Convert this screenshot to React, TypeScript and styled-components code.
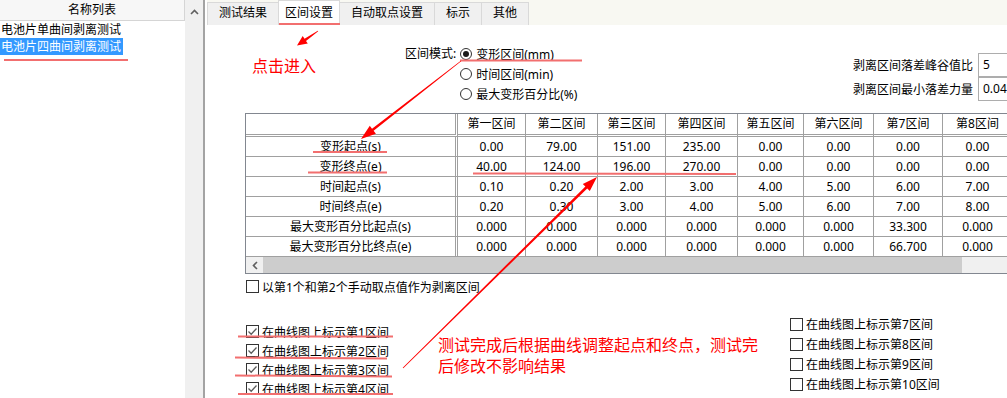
import styled, { createGlobalStyle, css } from "styled-components";

const GlobalStyle = createGlobalStyle`
  html, body {
    margin: 0;
    padding: 0;
    background: #fff;
  }
  body {
    font-family: "Noto Sans", "Noto Sans CJK SC", sans-serif;
    font-size: 12px;
    color: #000;
  }
  * {
    box-sizing: border-box;
  }
`;

const Window = styled.div`
  position: relative;
  display: flex;
  width: 1007px;
  height: 398px;
  overflow: hidden;
  background: #fff;
`;

/* left: name list */
const ListPanel = styled.div`
  display: flex;
  width: 205px;
  flex-shrink: 0;
  border-right: 2px solid #a3a3a3;
`;

const NameList = styled.div`
  display: flex;
  flex-direction: column;
  width: 185px;
`;

const ListHeader = styled.div`
  height: 21px;
  line-height: 20px;
  text-align: center;
  background: #f7f7f7;
  border-bottom: 1px solid #d5d5d5;
  border-right: 1px solid #d5d5d5;
`;

const ListItem = styled.div<{ $active?: boolean }>`
  align-self: flex-start;
  height: 17px;
  line-height: 17px;
  padding: 0 2px 0 1px;
  white-space: nowrap;
  ${(p) =>
    p.$active &&
    css`
      background: #3399ff;
      color: #fff;
    `}
`;

const VScroll = styled.div`
  width: 18px;
  background: #f0f0f0;
  display: flex;
  justify-content: center;
  padding-top: 9px;
`;

/* right: tabs + page */
const MainPanel = styled.div`
  flex: 1;
  min-width: 0;
  margin-left: 2px;
  display: flex;
  flex-direction: column;
`;

const TabBar = styled.div`
  height: 25px;
  display: flex;
  align-items: flex-end;
  background: #f8f8f2;
  flex-shrink: 0;
`;

const Tab = styled.div<{ $active?: boolean }>`
  height: 23px;
  line-height: 19px;
  padding: 0 11px;
  margin-right: -1px;
  background: #f0f0f0;
  border: 1px solid #d9d9d9;
  border-bottom: none;
  white-space: nowrap;
  ${(p) =>
    p.$active &&
    css`
      position: relative;
      z-index: 1;
      height: 25px;
      line-height: 23px;
      padding: 0 6px;
      background: #fff;
    `}
`;

const Page = styled.div`
  flex: 1;
  display: flex;
  flex-direction: column;
  padding-left: 38px;
  background: #fff;
  overflow: hidden;
`;

const TopRow = styled.div`
  display: flex;
  align-items: flex-start;
  height: 88px;
  margin-right: -21px;
  flex-shrink: 0;
`;

const ModeGroup = styled.div`
  display: flex;
  margin-left: 160px;
  margin-top: 19px;
`;

const ModeLabel = styled.div`
  line-height: 20px;
  margin-right: 4px;
`;

const RadioList = styled.div`
  display: flex;
  flex-direction: column;
`;

const RadioRow = styled.label`
  display: flex;
  align-items: center;
  gap: 4px;
  height: 20px;
  white-space: nowrap;
`;

const RadioMark = styled.span<{ $on?: boolean }>`
  position: relative;
  width: 12px;
  height: 12px;
  border: 1px solid #333;
  border-radius: 50%;
  background: #fff;
  ${(p) =>
    p.$on &&
    css`
      &::after {
        content: "";
        position: absolute;
        left: 2px;
        top: 2px;
        width: 6px;
        height: 6px;
        border-radius: 50%;
        background: #1a1a1a;
      }
    `}
`;

const ParamGroup = styled.div`
  margin-left: auto;
  margin-top: 28px;
  display: grid;
  grid-template-columns: auto 50px;
  grid-auto-rows: 24px;
  column-gap: 5px;
  align-items: center;
`;

const ParamLabel = styled.div`
  text-align: right;
  white-space: nowrap;
`;

const ParamInput = styled.div`
  height: 24px;
  line-height: 21px;
  padding-left: 4px;
  border: 1px solid #adadad;
  background: #fff;
  white-space: nowrap;
  overflow: hidden;
`;

/* table */
const COLS = [212, 68, 72, 68, 72, 66, 70, 69, 70, 70, 70];

const TableFrame = styled.div`
  align-self: flex-start;
  flex-shrink: 0;
  width: ${COLS.reduce((a, b) => a + b, 0) + 2}px;
  border: 1px solid #828790;
`;

const Grid = styled.div`
  display: grid;
  grid-template-columns: ${COLS.map((w) => `${w}px`).join(" ")};
`;

const Cell = styled.div<{ $head?: boolean; $first?: boolean }>`
  height: ${(p) => (p.$head ? 23 : 20)}px;
  line-height: ${(p) => (p.$head ? 20 : 19)}px;
  text-align: center;
  white-space: nowrap;
  overflow: hidden;
  border-right: ${(p) => (p.$first ? "3px double" : "1px solid")} #a0a0a0;
  border-bottom: ${(p) => (p.$head ? "3px double" : "1px solid")} #a0a0a0;
`;

const HScroll = styled.div`
  display: flex;
  height: 16px;
  background: #f0f0f0;
`;

const ScrollArrow = styled.div`
  width: 17px;
  display: flex;
  align-items: center;
  justify-content: center;
`;

const ScrollThumb = styled.div`
  width: 699px;
  background: #cdcdcd;
`;

/* check boxes */
const CheckRow = styled.label<{ $h?: number }>`
  display: flex;
  align-items: center;
  gap: 3px;
  height: ${(p) => p.$h ?? 19}px;
  white-space: nowrap;
`;

const Box = styled.span`
  display: inline-flex;
  width: 13px;
  height: 13px;
  border: 1px solid #333;
  background: #fff;
  flex-shrink: 0;
`;

const ManualRow = styled.div`
  margin-top: 3px;
  margin-left: 1px;
`;

const BottomRow = styled.div`
  display: grid;
  grid-template-columns: 544px auto;
  margin-left: 1px;
`;

const CheckColumn = styled.div<{ $top: number }>`
  display: flex;
  flex-direction: column;
  margin-top: ${(p) => p.$top}px;
`;

/* red annotations drawn over the window */
const Overlay = styled.svg`
  position: absolute;
  left: 0;
  top: 0;
  pointer-events: none;
  z-index: 5;
`;

const Note = styled.div<{ $x: number; $y: number }>`
  position: absolute;
  left: ${(p) => p.$x}px;
  top: ${(p) => p.$y}px;
  z-index: 6;
  font-family: "Noto Sans CJK SC", sans-serif;
  font-size: 16px;
  line-height: 21px;
  color: #ff0000;
  white-space: nowrap;
`;

const HEADERS = ["", "第一区间", "第二区间", "第三区间", "第四区间", "第五区间", "第六区间", "第7区间", "第8区间", "第9区间", "第10区间"];

const ROWS: [string, string[]][] = [
  ["变形起点(s)", ["0.00", "79.00", "151.00", "235.00", "0.00", "0.00", "0.00", "0.00", "0.00", "0.00"]],
  ["变形终点(e)", ["40.00", "124.00", "196.00", "270.00", "0.00", "0.00", "0.00", "0.00", "0.00", "0.00"]],
  ["时间起点(s)", ["0.10", "0.20", "2.00", "3.00", "4.00", "5.00", "6.00", "7.00", "8.00", "9.00"]],
  ["时间终点(e)", ["0.20", "0.30", "3.00", "4.00", "5.00", "6.00", "7.00", "8.00", "9.00", "10.00"]],
  ["最大变形百分比起点(s)", ["0.000", "0.000", "0.000", "0.000", "0.000", "0.000", "33.300", "0.000", "0.000", "0.000"]],
  ["最大变形百分比终点(e)", ["0.000", "0.000", "0.000", "0.000", "0.000", "0.000", "66.700", "0.000", "0.000", "0.000"]],
];

const UNDERLINES: [number, number, number, number][] = [
  [4, 60, 128, 60],
  [279, 24, 340, 24],
  [460, 60.5, 582, 60.5],
  [313, 152, 387, 152],
  [308, 172.5, 387, 172.5],
  [473, 173.5, 736, 174],
  [238, 336.5, 393, 336.5],
  [235, 357.5, 387, 358.5],
  [235, 375.5, 392, 376.5],
  [238, 394, 393, 394],
];

// tapered arrow polygon, thin at the tail, filled head at (x2, y2)
function arrow(x1: number, y1: number, x2: number, y2: number, head: number, half: number) {
  const len = Math.hypot(x2 - x1, y2 - y1);
  const ux = (x2 - x1) / len;
  const uy = (y2 - y1) / len;
  const nx = -uy;
  const ny = ux;
  const bx = x2 - ux * head;
  const by = y2 - uy * head;
  const pts = [
    [x1 + nx * 0.4, y1 + ny * 0.4],
    [bx + nx * 1.3, by + ny * 1.3],
    [bx + nx * half, by + ny * half],
    [x2, y2],
    [bx - nx * half, by - ny * half],
    [bx - nx * 1.3, by - ny * 1.3],
    [x1 - nx * 0.4, y1 - ny * 0.4],
  ];
  return pts.map(([x, y]) => `${x.toFixed(1)},${y.toFixed(1)}`).join(" ");
}

function Check({ on }: { on?: boolean }) {
  return (
    <Box>
      {on && (
        <svg width="11" height="11" viewBox="0 0 11 11">
          <polyline points="1.5,5.5 4.2,8.2 9.5,2.5" fill="none" stroke="#5c5c5c" strokeWidth="1.3" />
        </svg>
      )}
    </Box>
  );
}

function App() {
  return (
    <>
      <GlobalStyle />
      <Window>
        <ListPanel>
          <NameList>
            <ListHeader>名称列表</ListHeader>
            <ListItem>电池片单曲间剥离测试</ListItem>
            <ListItem $active>电池片四曲间剥离测试</ListItem>
          </NameList>
          <VScroll>
            <svg width="9" height="6" viewBox="0 0 9 6">
              <polyline points="1,5 4.5,1.5 8,5" fill="none" stroke="#606060" strokeWidth="1.6" />
            </svg>
          </VScroll>
        </ListPanel>

        <MainPanel>
          <TabBar>
            <Tab>测试结果</Tab>
            <Tab $active>区间设置</Tab>
            <Tab>自动取点设置</Tab>
            <Tab>标示</Tab>
            <Tab>其他</Tab>
          </TabBar>

          <Page>
            <TopRow>
              <ModeGroup>
                <ModeLabel>区间模式:</ModeLabel>
                <RadioList>
                  <RadioRow>
                    <RadioMark $on />
                    变形区间(mm)
                  </RadioRow>
                  <RadioRow>
                    <RadioMark />
                    时间区间(min)
                  </RadioRow>
                  <RadioRow>
                    <RadioMark />
                    最大变形百分比(%)
                  </RadioRow>
                </RadioList>
              </ModeGroup>
              <ParamGroup>
                <ParamLabel>剥离区间落差峰谷值比</ParamLabel>
                <ParamInput>5</ParamInput>
                <ParamLabel>剥离区间最小落差力量</ParamLabel>
                <ParamInput>0.045</ParamInput>
              </ParamGroup>
            </TopRow>

            <TableFrame>
              <Grid>
                {HEADERS.map((h, i) => (
                  <Cell key={i} $head $first={i === 0}>
                    {h}
                  </Cell>
                ))}
                {ROWS.map(([label, values]) => [
                  <Cell key={label} $first>
                    {label}
                  </Cell>,
                  ...values.map((v, i) => <Cell key={label + i}>{v}</Cell>),
                ])}
              </Grid>
              <HScroll>
                <ScrollArrow>
                  <svg width="6" height="9" viewBox="0 0 6 9">
                    <polyline points="5,1 1.5,4.5 5,8" fill="none" stroke="#606060" strokeWidth="1.6" />
                  </svg>
                </ScrollArrow>
                <ScrollThumb />
              </HScroll>
            </TableFrame>

            <ManualRow>
              <CheckRow>
                <Check />
                以第1个和第2个手动取点值作为剥离区间
              </CheckRow>
            </ManualRow>

            <BottomRow>
              <CheckColumn $top={26}>
                {[1, 2, 3, 4].map((n) => (
                  <CheckRow key={n}>
                    <Check on />
                    在曲线图上标示第{n}区间
                  </CheckRow>
                ))}
              </CheckColumn>
              <CheckColumn $top={18}>
                {[7, 8, 9, 10].map((n) => (
                  <CheckRow key={n} $h={20}>
                    <Check />
                    在曲线图上标示第{n}区间
                  </CheckRow>
                ))}
              </CheckColumn>
            </BottomRow>
          </Page>
        </MainPanel>

        <Overlay width="1007" height="398" viewBox="0 0 1007 398">
          {UNDERLINES.map(([x1, y1, x2, y2], i) => (
            <line key={i} x1={x1} y1={y1} x2={x2} y2={y2} stroke="#f26f6f" strokeWidth="2" />
          ))}
          <polygon points={arrow(318, 31, 297, 45.5, 10, 4.5)} fill="#ff0000" />
          <polygon points={arrow(461, 61, 361, 139, 15, 5)} fill="#ff0000" />
          <polygon points={arrow(403, 368, 597, 177, 15, 5)} fill="#ff0000" />
        </Overlay>

        <Note $x={252} $y={55}>点击进入</Note>
        <Note $x={438} $y={334}>
          测试完成后根据曲线调整起点和终点，测试完
          <br />
          后修改不影响结果
        </Note>
      </Window>
    </>
  );
}

export default App;
